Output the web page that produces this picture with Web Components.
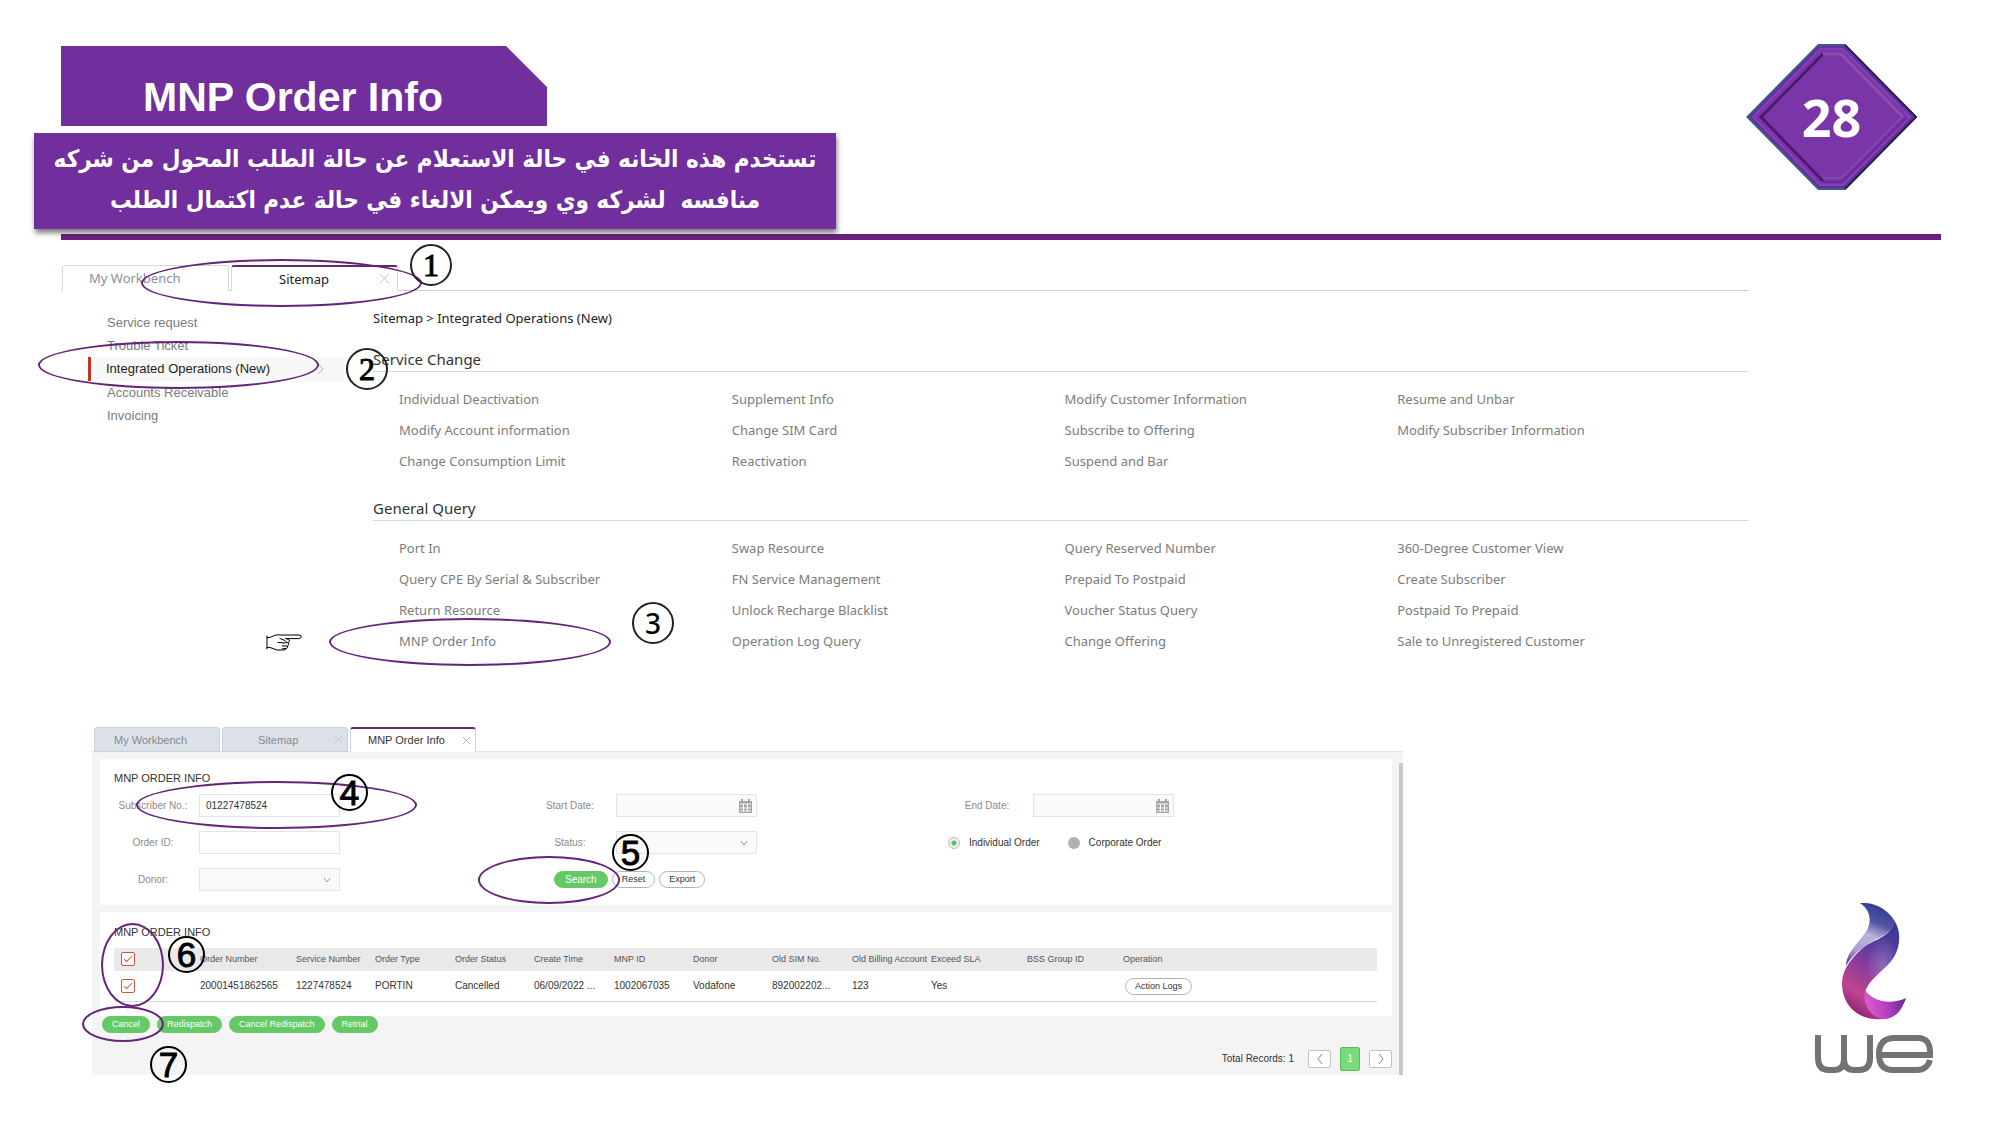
<!DOCTYPE html>
<html lang="en">
<head>
<meta charset="utf-8">
<title>MNP Order Info</title>
<style>
  body { margin: 0; background: #fff; font-family: "Liberation Sans", sans-serif; color: #333; }
</style>
</head>
<body>
<guide-slide></guide-slide>

<template id="t-slide">
  <style>
    :host { display: block; position: relative; padding-bottom: 50px; }
    site-map { margin: 25px 251px 0 61px; }
    order-console { margin: 70px 597px 0 92px; }
    .mark { position: absolute; right: 67px; bottom: 50px; }
  </style>
  <slide-header number="28">
    <span slot="title">MNP Order Info</span>
    <span slot="note">تستخدم هذه الخانه في حالة الاستعلام عن حالة الطلب المحول من شركه<br>منافسه &nbsp;لشركه وي ويمكن الالغاء في حالة عدم اكتمال الطلب</span>
  </slide-header>
  <site-map></site-map>
  <order-console></order-console>
  <we-logo class="mark"></we-logo>
  <step-marks></step-marks>
</template>

<template id="t-header">
  <style>
    :host { display: block; }
    .top { display: flex; justify-content: space-between; align-items: flex-start; padding: 44px 83px 0 34px; }
    .left { display: flex; flex-direction: column; gap: 7px; padding-top: 2px; }
    h1 { margin: 0 0 0 27px; width: 486px; height: 80px; box-sizing: border-box; padding: 27px 0 0 82px; background: #702f9d;
      clip-path: polygon(0 0, 445px 0, 100% 41px, 100% 100%, 0 100%);
      font: bold 41px/48px "Liberation Sans", sans-serif; color: #fff; }
    p { margin: 0; width: 802px; height: 96px; box-sizing: border-box; padding-top: 6px; background: #702f9d; color: #fff;
      box-shadow: 1px 4px 5px rgba(0,0,0,.5); text-align: center; white-space: nowrap;
      font: bold 24px/41px "DejaVu Sans Condensed", "DejaVu Sans", sans-serif; }
    .badge { display: grid; place-items: center; }
    .badge > * { grid-area: 1 / 1; }
    .badge svg { width: 171px; height: 146px; display: block; }
    .badge span { font: bold 52px/60px "Open Sans", sans-serif; color: #fff; }
    hr { margin: 5px 59px 0 61px; height: 6px; border: 0; background: #6b217f; }
  </style>
  <div class="top">
    <div class="left">
      <h1><slot name="title"></slot></h1>
      <p dir="rtl" lang="ar"><slot name="note"></slot></p>
    </div>
    <div class="badge">
      <svg viewBox="0 0 171 146" aria-hidden="true">
        <path d="M0 73 72 0H99L171 73 99 146H72Z" fill="#3d5a8c"/>
        <path d="M99 1 170 73 99 145" fill="none" stroke="#2a1c50" stroke-width="2"/>
        <path d="M3 73 73 2H98L168 73 98 144H73Z" fill="#6b2b98"/>
        <path d="M7 73 74 5H97L164 73 97 141H74Z" fill="#7a36ab" stroke="#863fbb" stroke-width="2"/>
        <path d="M13 73 77 9H96L158 73 96 137H77Z" fill="#7a36a9"/>
        <path d="M77 137 15 73 77 10" fill="none" stroke="#4a1c6c" stroke-width="3"/>
        <path d="M77 10H95L157 73" fill="none" stroke="#8850ab" stroke-width="3"/>
        <path d="M156 73 95 134H77" fill="none" stroke="#9358bd" stroke-width="1"/>
        <path d="M160 74 96 138H77" fill="none" stroke="#652d90" stroke-width="2"/>
      </svg>
      <span id="num"></span>
    </div>
  </div>
  <hr>
</template>

<template id="t-sitemap">
  <style>
    :host { display: block; font-family: "Noto Sans", sans-serif; }
    .tabs { display: flex; gap: 2px; height: 26px; box-sizing: border-box; border-bottom: 1px solid #c9d2d4; padding-left: 1px; }
    .tabs button { all: unset; box-sizing: border-box; width: 167px; height: 26px; display: flex; align-items: center; background: #fff;
      border: 1px solid #d3dadd; border-radius: 3px 3px 0 0; font-size: 13px; color: #8a8f94; padding-left: 26px; }
    .tabs button { border-bottom-color: #fff; }
    .tabs .on { color: #222; border-top: 2px solid #5f2a70; padding: 0 7px 0 47px; justify-content: space-between; }
    .body { display: flex; gap: 29px; padding-top: 19px; }
    nav ul { list-style: none; margin: 0 0 0 27px; padding: 1px 0 0; width: 256px; }
    nav a { display: flex; align-items: center; justify-content: space-between; height: 23px; padding-left: 19px; font: 13px/16px "Liberation Sans", sans-serif; color: #7b7b7b; text-decoration: none; }
    nav a[aria-current] { height: 24px; color: #222; background: #f8f8f8; border-left: 3px solid #c8321e; padding: 0 20px 0 15px; }
    main { flex: 1; display: block; }
    .crumb { margin: 0; padding-bottom: 2px; font-size: 13px; line-height: 16px; color: #222; }
  </style>
  <div class="tabs">
    <button>My Workbench</button>
    <button class="on">Sitemap
      <svg width="11" height="11" viewBox="0 0 11 11"><path d="M1 1 10 10M10 1 1 10" stroke="#c4c4c4" fill="none"/></svg></button>
  </div>
  <div class="body">
    <nav><ul>
      <li><a href="#">Service request</a></li>
      <li><a href="#">Trouble Ticket</a></li>
      <li><a href="#" aria-current="page">Integrated Operations (New)
        <svg width="7" height="12" viewBox="0 0 7 12"><path d="M1 1 6 6 1 11" stroke="#b5b5b5" fill="none"/></svg></a></li>
      <li><a href="#">Accounts Receivable</a></li>
      <li><a href="#">Invoicing</a></li>
    </ul></nav>
    <main>
      <p class="crumb">Sitemap &gt; Integrated Operations (New)</p>
      <link-group heading="Service Change" links="Individual Deactivation|Supplement Info|Modify Customer Information|Resume and Unbar|Modify Account information|Change SIM Card|Subscribe to Offering|Modify Subscriber Information|Change Consumption Limit|Reactivation|Suspend and Bar"></link-group>
      <link-group heading="General Query" links="Port In|Swap Resource|Query Reserved Number|360-Degree Customer View|Query CPE By Serial &amp; Subscriber|FN Service Management|Prepaid To Postpaid|Create Subscriber|Return Resource|Unlock Recharge Blacklist|Voucher Status Query|Postpaid To Prepaid|MNP Order Info|Operation Log Query|Change Offering|Sale to Unregistered Customer"></link-group>
    </main>
  </div>
</template>

<template id="t-group">
  <style>
    :host { display: block; padding-top: 21px; }
    h2 { margin: 0; padding-bottom: 2px; font-size: 15px; font-weight: 400; line-height: 20px; color: #333; border-bottom: 1px solid #d5dcdd; }
    div { display: grid; grid-template-columns: repeat(4, 1fr); padding: 12px 19px 0 26px; }
    a { font-size: 13px; line-height: 31px; color: #7c7c7c; text-decoration: none; }
  </style>
  <h2></h2><div></div>
</template>

<template id="t-console">
  <style>
    :host { display: block; font-size: 10px; line-height: 16px; }
    .tabs { display: flex; gap: 2px; padding-left: 2px; height: 25px; box-sizing: border-box; border-bottom: 1px solid #dfe3e5; }
    .tabs button { all: unset; box-sizing: border-box; width: 126px; height: 25px; display: flex; align-items: center; justify-content: space-between;
      background: #dce1e7; border: 1px solid #cbd2d9; border-radius: 3px 3px 0 0; font-size: 11px; color: #858b92; padding: 0 4px 0 19px; }
    .tabs .mid { padding-left: 35px; }
    .tabs .on { background: #fff; border-top: 2px solid #5f2a70; border-bottom-color: #fff; color: #333; padding-left: 17px; }
    .body { background: linear-gradient(#c9c9c9, #c9c9c9) right bottom / 4px calc(100% - 11px) no-repeat #f4f4f4; padding: 7px 11px 4px 8px; }
    section { background: #fff; padding: 11px 15px 14px 14px; }
    section + section { margin-top: 7px; padding-top: 12px; }
    h2 { margin: 0 0 8px; font-size: 11px; font-weight: 400; line-height: 16px; color: #333; }
    form { display: grid; grid-template-columns: repeat(3, 1fr); gap: 14px 0; padding-right: 12px; }
    .acts { display: flex; align-items: center; gap: 4px; padding-left: 23px; }
    .radios { display: flex; align-items: center; }
    .radios label { color: #333; padding: 0 28px 0 9px; }
    input[type=radio] { appearance: none; margin: 0; width: 12px; height: 12px; border-radius: 50%; background: #b1b1b1; }
    input[type=radio]:checked { background: radial-gradient(circle, #5cbf5e 0 2px, #e9eeea 3px); border: 1px solid #bbb; }
    table { width: 100%; border-collapse: collapse; table-layout: fixed; }
    th { background: #e9e9e9; font-size: 9px; font-weight: 400; text-align: left; height: 21px; padding: 0 0 2px; color: #555; white-space: nowrap; }
    td { height: 30px; padding: 0; color: #333; border-bottom: 1px solid #d6d6d6; white-space: nowrap; }
    th:first-child, td:first-child { padding-left: 7px; }
    td pill-button { margin-left: 2px; }
    input[type=checkbox] { appearance: none; display: block; box-sizing: border-box; margin: 0; width: 14px; height: 14px; border: 1px solid #c9543f; border-radius: 2px; background: #fff; }
    input[type=checkbox]::before { content: ""; display: block; width: 7px; height: 3px; margin: 3px 0 0 2px; border: solid #c9543f; border-width: 0 0 1px 1px; rotate: -45deg; }
    .bulk { display: flex; gap: 7px; padding-left: 2px; }
    .pager { display: flex; align-items: center; justify-content: flex-end; gap: 9px; padding-top: 14px; height: 24px; color: #333; }
    .pager button { all: unset; box-sizing: border-box; width: 23px; height: 18px; border: 1px solid #c2c2c2; border-radius: 2px; background: #fff; display: grid; place-items: center; }
    .pager .cur { width: 20px; height: 24px; background: #78dc7a; border-color: #5dba60; color: #fff; }
    .pager span { padding-right: 5px; }
  </style>
  <div class="tabs">
    <button>My Workbench</button>
    <button class="mid">Sitemap <svg width="9" height="9" viewBox="0 0 9 9"><path d="M1 1 8 8M8 1 1 8" stroke="#bcc2c8" fill="none"/></svg></button>
    <button class="on">MNP Order Info <svg width="9" height="9" viewBox="0 0 9 9"><path d="M1 1 8 8M8 1 1 8" stroke="#b5b5b5" fill="none"/></svg></button>
  </div>
  <div class="body">
    <section>
      <h2>MNP ORDER INFO</h2>
      <form>
        <form-field label="Subscriber No.:" value="01227478524"></form-field>
        <form-field label="Start Date:" kind="date"></form-field>
        <form-field label="End Date:" kind="date"></form-field>
        <form-field label="Order ID:"></form-field>
        <form-field label="Status:" kind="select"></form-field>
        <div class="radios">
          <input type="radio" name="kind" id="ind" checked><label for="ind">Individual Order</label>
          <input type="radio" name="kind" id="corp"><label for="corp">Corporate Order</label>
        </div>
        <form-field label="Donor:" kind="select"></form-field>
        <div class="acts"><pill-button class="green big">Search</pill-button><pill-button>Reset</pill-button><pill-button>Export</pill-button></div>
      </form>
    </section>
    <section>
      <h2>MNP ORDER INFO</h2>
      <table>
        <colgroup><col style="width:86px"><col style="width:96px"><col style="width:79px"><col style="width:80px"><col style="width:79px"><col style="width:80px"><col style="width:79px"><col style="width:79px"><col style="width:80px"><col style="width:79px"><col style="width:96px"><col style="width:96px"><col></colgroup>
        <thead><tr><th><input type="checkbox" checked aria-label="Select all"></th><th>Order Number</th><th>Service Number</th><th>Order Type</th><th>Order Status</th><th>Create Time</th><th>MNP ID</th><th>Donor</th><th>Old SIM No.</th><th>Old Billing Account</th><th>Exceed SLA</th><th>BSS Group ID</th><th>Operation</th></tr></thead>
        <tbody><tr><td><input type="checkbox" checked aria-label="Select order"></td><td>20001451862565</td><td>1227478524</td><td>PORTIN</td><td>Cancelled</td><td>06/09/2022 ...</td><td>1002067035</td><td>Vodafone</td><td>892002202...</td><td>123</td><td>Yes</td><td></td><td><pill-button>Action Logs</pill-button></td></tr></tbody>
      </table>
    </section>
    <div class="bulk"><pill-button class="green">Cancel</pill-button><pill-button class="green">Redispatch</pill-button><pill-button class="green">Cancel Redispatch</pill-button><pill-button class="green">Retrial</pill-button></div>
    <div class="pager"><span>Total Records: 1</span>
      <button aria-label="Previous"><svg width="6" height="12" viewBox="0 0 6 12"><path d="M5 1 1 6 5 11" stroke="#888" fill="none"/></svg></button>
      <button class="cur">1</button>
      <button aria-label="Next"><svg width="6" height="12" viewBox="0 0 6 12"><path d="M1 1 5 6 1 11" stroke="#888" fill="none"/></svg></button>
    </div>
  </div>
</template>

<template id="t-pill">
  <style>
    :host { display: inline-block; vertical-align: middle; }
    button { display: block; box-sizing: border-box; height: 17px; margin: 0; padding: 0 9px; border: 1px solid #b3b3b3; border-radius: 9px; background: #fff; color: #333; font: 9px/15px "Liberation Sans", sans-serif; }
    :host(.green) button { background: #64c966; border-color: #64c966; color: #fff; }
    :host(.big) button { font-size: 10px; padding: 0 10px; }
  </style>
  <button type="button"><slot></slot></button>
</template>

<template id="t-field">
  <style>
    :host { display: flex; align-items: center; gap: 7px; }
    label { width: 78px; text-align: center; color: #8a8a8a; white-space: nowrap; }
    .box { display: grid; align-items: center; width: 141px; height: 23px; }
    .box > * { grid-area: 1 / 1; }
    input, select { appearance: none; box-sizing: border-box; width: 100%; height: 23px; margin: 0; padding: 0 6px; border: 1px solid #e4e4e4; border-radius: 0; background: #fff; font: 10px "Liberation Sans", sans-serif; color: #333; }
    .grey { background: #fafafa; }
    svg { justify-self: end; margin-right: 5px; pointer-events: none; }
    .chev { margin-right: 9px; }
  </style>
  <label for="c"></label><div class="box"></div>
</template>

<template id="t-marks">
  <style>
    :host { position: absolute; inset: 0; pointer-events: none; }
    i { position: absolute; box-sizing: border-box; border: 2px solid #65237a; border-radius: 50%; }
    b { position: absolute; box-sizing: border-box; display: grid; place-items: center; width: 42px; height: 42px; margin: -21px 0 0 -21px;
      border: 2px solid #222; border-radius: 50%; font: 400 32px/38px "Liberation Serif", serif; -webkit-text-stroke: 1px #000; color: #000; }
    b.sans { font: 500 28px/38px "Noto Sans", sans-serif; -webkit-text-stroke: 0; }
    b.big { width: 37px; height: 37px; margin: -18px 0 0 -18px; border-color: #000; font: 400 35px/33px "Liberation Sans", sans-serif; }
    .hand { position: absolute; left: 266px; top: 634px; }
  </style>
  <i style="left:141px;top:259px;width:281px;height:48px"></i>
  <i style="left:38px;top:341px;width:281px;height:48px"></i>
  <i style="left:329px;top:618px;width:282px;height:48px"></i>
  <i style="left:136px;top:781px;width:281px;height:48px"></i>
  <i style="left:478px;top:856px;width:142px;height:48px"></i>
  <i style="left:101px;top:923px;width:63px;height:84px"></i>
  <i style="left:82px;top:1006px;width:82px;height:36px"></i>
  <b style="left:431px;top:265px">1</b>
  <b style="left:367px;top:369px">2</b>
  <b class="sans" style="left:653px;top:623px">3</b>
  <b class="big" style="left:349px;top:792px">4</b>
  <b class="big" style="left:630px;top:852px">5</b>
  <b class="big" style="left:186px;top:954px">6</b>
  <b class="big" style="left:168px;top:1064px">7</b>
  <svg class="hand" width="36" height="17" viewBox="0 0 36 17" role="img" aria-label="Pointing hand">
    <g fill="none" stroke="#000" stroke-width="1" stroke-linejoin="round" stroke-linecap="round">
      <path d="M1 2V15M1 3.500Q4 4 6 2.500L10 1Q12 .6 14 1H33Q35.500 1.200 35.200 3 35 4.600 32.500 4.600H20"/>
      <path d="M1 13.500Q4 13 7 14.500L11 16H18Q20 16 20 14.500M14 4.500 19 6.500Q21 7.500 19 8.800 17 9.500 15 8.500L12 8.500"/>
      <path d="M20 4.600Q24 5 23.500 7 23.200 9 20 9M22.500 9Q24 11 21.500 12H16.500M21.500 12Q22.500 14 20 14.600H16.500"/>
    </g>
  </svg>
</template>

<template id="t-logo">
  <style>:host { display: block; } svg { display: block; }</style>
  <svg width="118" height="172" viewBox="0 0 118 172" role="img" aria-label="we">
    <defs>
      <linearGradient id="a" x1=".7" y1="0" x2=".3" y2="1"><stop offset="0" stop-color="#3a3a96"/><stop offset=".3" stop-color="#5a3a9e"/><stop offset=".5" stop-color="#8a3a9c"/><stop offset=".78" stop-color="#c0458f"/><stop offset="1" stop-color="#8a1f78"/></linearGradient>
      <linearGradient id="b" x1=".6" y1="0" x2=".3" y2="1"><stop offset="0" stop-color="#2e3c93"/><stop offset=".28" stop-color="#5254a5"/><stop offset=".5" stop-color="#b9b4d8"/><stop offset=".8" stop-color="#a9a0cf"/><stop offset="1" stop-color="#5d4a9f"/></linearGradient>
      <linearGradient id="c" x1="0" y1=".4" x2="1" y2=".3"><stop offset="0" stop-color="#d95fcb"/><stop offset=".5" stop-color="#b83ec2"/><stop offset="1" stop-color="#5f2a94"/></linearGradient>
      <radialGradient id="d" cx=".72" cy=".46" r=".3"><stop offset="0" stop-color="#b79ad2" stop-opacity=".5"/><stop offset="1" stop-color="#b79ad2" stop-opacity="0"/></radialGradient>
    </defs>
    <path d="M79 17C86 27 86 42 79 54 71 67 50 78 50 92 50 104 57 113 68 116 45 118 27 104 27 80 27 66 38 53 50 43 62 36 78 32 79 17Z" fill="url(#a)"/>
    <path d="M79 17C86 27 86 42 79 54 71 67 50 78 50 92 50 104 57 113 68 116 45 118 27 104 27 80 27 66 38 53 50 43 62 36 78 32 79 17Z" fill="url(#d)"/>
    <path d="M45 0C60-1 72 6 79 17 80 29 66 33 55 40 44 47 36 53 31 63 31 52 40 43 47 34 58 22 57 8 45 0Z" fill="url(#b)"/>
    <path d="M50 87C58 99 76 102 91 95 86 110 78 117 66 116 53 111 48 100 50 87Z" fill="url(#c)"/>
    <g fill="none" stroke="#737373" stroke-width="6">
      <path d="M3 132V155Q3 167 14 167H19Q29 167 29 156V132M29 156Q29 167 39 167H44Q55 167 55 155V132"/>
      <path d="M64 152H115Q116 135 103 135H78Q64 136 64 151 64 167 78 167H102Q112 167 115 157"/>
    </g>
  </svg>
</template>

<script>
  const stamp = (el, id) => {
    const root = el.attachShadow({ mode: "open" });
    root.append(document.getElementById(id).content.cloneNode(true));
    return root;
  };
  const plain = (tag, id) => customElements.define(tag, class extends HTMLElement {
    constructor() { super(); stamp(this, id); }
  });

  customElements.define("slide-header", class extends HTMLElement {
    connectedCallback() {
      if (this.shadowRoot) return;
      stamp(this, "t-header").getElementById("num").textContent = this.getAttribute("number");
    }
  });

  customElements.define("link-group", class extends HTMLElement {
    connectedCallback() {
      if (this.shadowRoot) return;
      const root = stamp(this, "t-group");
      root.querySelector("h2").textContent = this.getAttribute("heading");
      for (const name of this.getAttribute("links").split("|")) {
        const a = document.createElement("a");
        a.href = "#";
        a.textContent = name;
        root.querySelector("div").append(a);
      }
    }
  });

  const CALENDAR = `<svg width="13" height="14" viewBox="0 0 13 14"><path d="M0 2H13V14H0ZM2 0H4V3H2ZM9 0H11V3H9Z" fill="#a5a5a5"/><path d="M1 5H12M1 9H12M1 12H12M4.500 5V13M8.500 5V13" stroke="#fafafa" fill="none"/></svg>`;
  const CHEVRON = `<svg class="chev" width="8" height="6" viewBox="0 0 8 6"><path d="M1 1 4 5 7 1" stroke="#999" fill="none"/></svg>`;

  customElements.define("form-field", class extends HTMLElement {
    connectedCallback() {
      if (this.shadowRoot) return;
      const root = stamp(this, "t-field");
      const kind = this.getAttribute("kind");
      root.querySelector("label").textContent = this.getAttribute("label");
      const box = root.querySelector(".box");
      if (kind === "select") box.innerHTML = `<select id="c" class="grey"><option></option></select>${CHEVRON}`;
      else if (kind === "date") box.innerHTML = `<input id="c" class="grey" type="text">${CALENDAR}`;
      else box.innerHTML = `<input id="c" type="text" value="${this.getAttribute("value") || ""}">`;
    }
  });

  plain("pill-button", "t-pill");
  plain("we-logo", "t-logo");
  plain("step-marks", "t-marks");
  plain("site-map", "t-sitemap");
  plain("order-console", "t-console");
  plain("guide-slide", "t-slide");
</script>
</body>
</html>
